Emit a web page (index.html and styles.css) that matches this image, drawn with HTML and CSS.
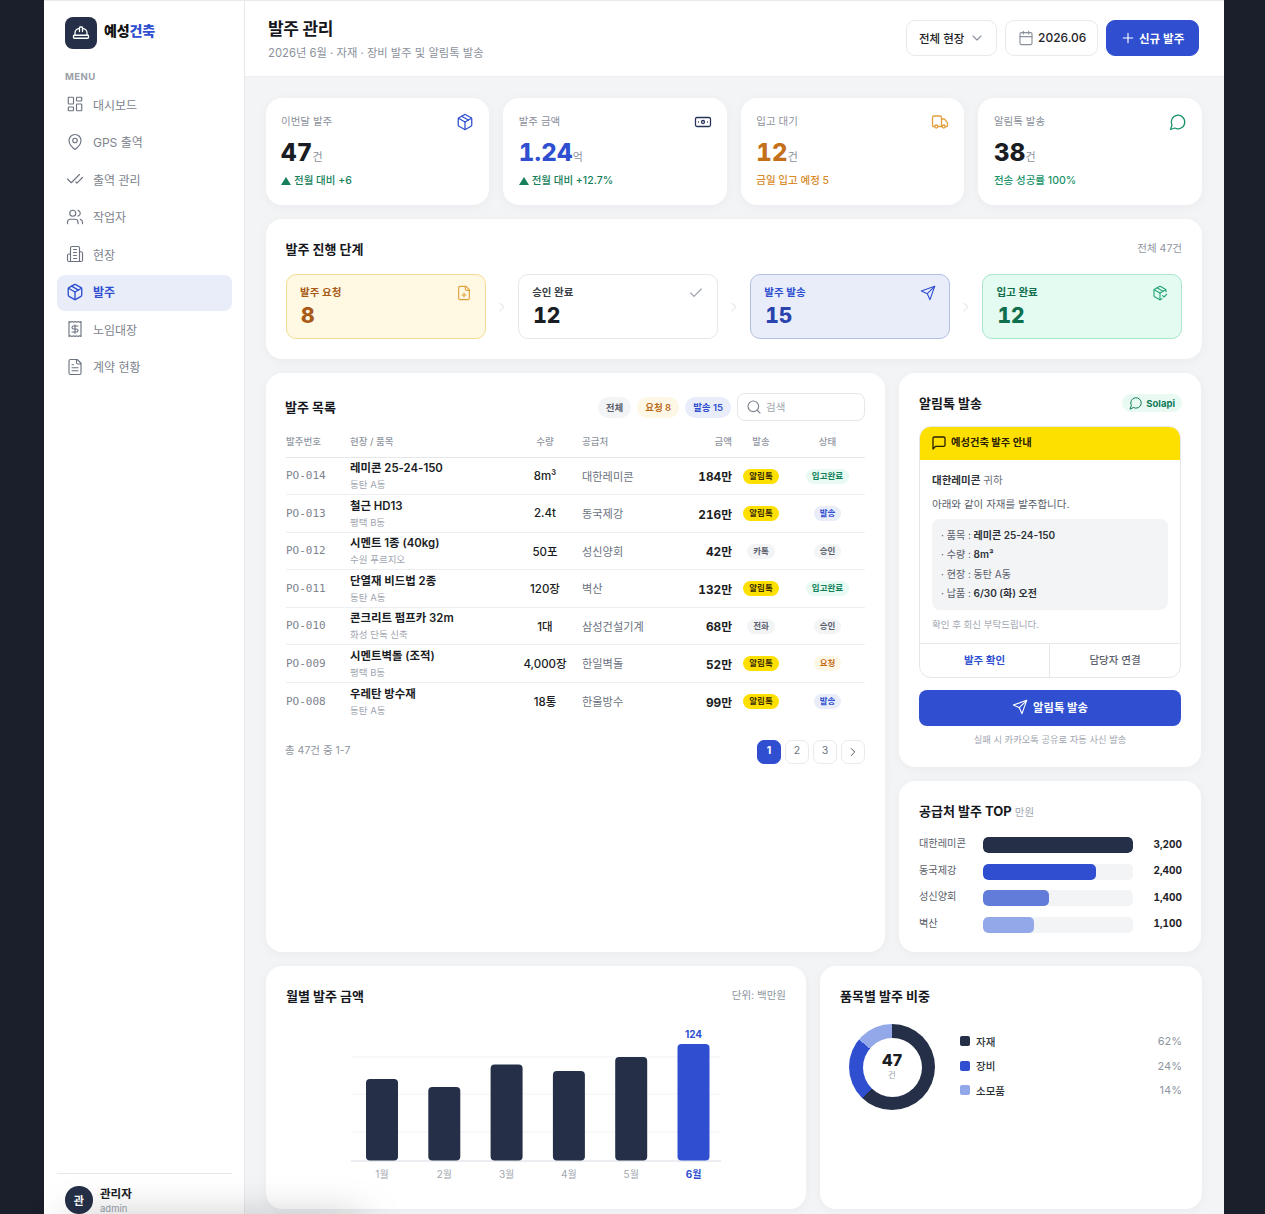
FILE: index.html
```html
<!DOCTYPE html>
<html lang="ko">
<head>
<meta charset="utf-8">
<title>발주 관리</title>
<link rel="stylesheet" href="styles.css">
</head>
<body>
<svg class="sprite" aria-hidden="true">
  <symbol id="i-hat" viewBox="0 0 24 24"><path d="M2 18a1 1 0 0 0 1 1h18a1 1 0 0 0 1-1v-2a1 1 0 0 0-1-1H3a1 1 0 0 0-1 1v2z"/><path d="M10 10V5a1 1 0 0 1 1-1h2a1 1 0 0 1 1 1v5"/><path d="M4 15v-3a6 6 0 0 1 6-6"/><path d="M14 6a6 6 0 0 1 6 6v3"/></symbol>
  <symbol id="i-dash" viewBox="0 0 24 24"><rect x="3" y="3" width="7" height="9" rx="1"/><rect x="14" y="3" width="7" height="5" rx="1"/><rect x="14" y="12" width="7" height="9" rx="1"/><rect x="3" y="16" width="7" height="5" rx="1"/></symbol>
  <symbol id="i-pin" viewBox="0 0 24 24"><path d="M20 10c0 6-8 12-8 12s-8-6-8-12a8 8 0 0 1 16 0Z"/><circle cx="12" cy="10" r="3"/></symbol>
  <symbol id="i-checks" viewBox="0 0 24 24"><path d="M18 6 7 17l-5-5"/><path d="m22 10-7.5 7.5L13 16"/></symbol>
  <symbol id="i-users" viewBox="0 0 24 24"><path d="M16 21v-2a4 4 0 0 0-4-4H6a4 4 0 0 0-4 4v2"/><circle cx="9" cy="7" r="4"/><path d="M22 21v-2a4 4 0 0 0-3-3.87"/><path d="M16 3.13a4 4 0 0 1 0 7.75"/></symbol>
  <symbol id="i-building" viewBox="0 0 24 24"><path d="M6 22V4a2 2 0 0 1 2-2h8a2 2 0 0 1 2 2v18Z"/><path d="M6 12H4a2 2 0 0 0-2 2v6a2 2 0 0 0 2 2h2"/><path d="M18 9h2a2 2 0 0 1 2 2v9a2 2 0 0 1-2 2h-2"/><path d="M10 6h4M10 10h4M10 14h4M10 18h4"/></symbol>
  <symbol id="i-box" viewBox="0 0 24 24"><path d="M21 8a2 2 0 0 0-1-1.73l-7-4a2 2 0 0 0-2 0l-7 4A2 2 0 0 0 3 8v8a2 2 0 0 0 1 1.73l7 4a2 2 0 0 0 2 0l7-4A2 2 0 0 0 21 16Z"/><path d="m3.3 7 8.7 5 8.7-5"/><path d="M12 22V12"/><path d="m7.5 4.27 9 5.15"/></symbol>
  <symbol id="i-receipt" viewBox="0 0 24 24"><path d="M4 2v20l2-1 2 1 2-1 2 1 2-1 2 1 2-1 2 1V2l-2 1-2-1-2 1-2-1-2 1-2-1-2 1Z"/><path d="M16 8h-6a2 2 0 1 0 0 4h4a2 2 0 1 1 0 4H8"/><path d="M12 17.5v-11"/></symbol>
  <symbol id="i-file" viewBox="0 0 24 24"><path d="M15 2H6a2 2 0 0 0-2 2v16a2 2 0 0 0 2 2h12a2 2 0 0 0 2-2V7Z"/><path d="M14 2v4a2 2 0 0 0 2 2h4"/><path d="M10 9H8M16 13H8M16 17H8"/></symbol>
  <symbol id="i-fileplus" viewBox="0 0 24 24"><path d="M15 2H6a2 2 0 0 0-2 2v16a2 2 0 0 0 2 2h12a2 2 0 0 0 2-2V7Z"/><path d="M14 2v4a2 2 0 0 0 2 2h4"/><path d="M9 15h6"/><path d="M12 18v-6"/></symbol>
  <symbol id="i-bank" viewBox="0 0 24 24"><rect x="2" y="6" width="20" height="12" rx="2"/><circle cx="12" cy="12" r="2"/><path d="M6 12h.01M18 12h.01"/></symbol>
  <symbol id="i-truck" viewBox="0 0 24 24"><path d="M14 18V6a2 2 0 0 0-2-2H4a2 2 0 0 0-2 2v11a1 1 0 0 0 1 1h2"/><path d="M15 18H9"/><path d="M19 18h2a1 1 0 0 0 1-1v-3.65a1 1 0 0 0-.22-.624l-3.48-4.35A1 1 0 0 0 17.52 8H14"/><circle cx="17" cy="18" r="2"/><circle cx="7" cy="18" r="2"/></symbol>
  <symbol id="i-bubble" viewBox="0 0 24 24"><path d="M7.9 20A9 9 0 1 0 4 16.1L2 22Z"/></symbol>
  <symbol id="i-msq" viewBox="0 0 24 24"><path d="M21 15a2 2 0 0 1-2 2H7l-4 4V5a2 2 0 0 1 2-2h14a2 2 0 0 1 2 2z"/></symbol>
  <symbol id="i-check" viewBox="0 0 24 24"><path d="M20 6 9 17l-5-5"/></symbol>
  <symbol id="i-send" viewBox="0 0 24 24"><path d="m22 2-7 20-4-9-9-4Z"/><path d="M22 2 11 13"/></symbol>
  <symbol id="i-pkgcheck" viewBox="0 0 24 24"><path d="m16 16 2 2 4-4"/><path d="M21 10V8a2 2 0 0 0-1-1.73l-7-4a2 2 0 0 0-2 0l-7 4A2 2 0 0 0 3 8v8a2 2 0 0 0 1 1.73l7 4a2 2 0 0 0 2 0l2-1.14"/><path d="m7.5 4.27 9 5.15"/><path d="M3.29 7 12 12l8.71-5"/><path d="M12 22V12"/></symbol>
  <symbol id="i-down" viewBox="0 0 24 24"><path d="m6 9 6 6 6-6"/></symbol>
  <symbol id="i-right" viewBox="0 0 24 24"><path d="m9 18 6-6-6-6"/></symbol>
  <symbol id="i-cal" viewBox="0 0 24 24"><path d="M8 2v4M16 2v4"/><rect x="3" y="4" width="18" height="18" rx="2"/><path d="M3 10h18"/></symbol>
  <symbol id="i-plus" viewBox="0 0 24 24"><path d="M5 12h14M12 5v14"/></symbol>
  <symbol id="i-search" viewBox="0 0 24 24"><circle cx="11" cy="11" r="8"/><path d="m21 21-4.3-4.3"/></symbol>
</svg>

<div class="app">
  <aside class="sidebar">
    <div class="brand">
      <span class="brand-mark"><svg class="ic ic-18"><use href="#i-hat"/></svg></span>
      <span class="brand-name">예성<em>건축</em></span>
    </div>
    <div class="nav-label">MENU</div>
    <nav class="nav">
      <a class="nav-item"><svg class="ic ic-18"><use href="#i-dash"/></svg>대시보드</a>
      <a class="nav-item"><svg class="ic ic-18"><use href="#i-pin"/></svg>GPS 출역</a>
      <a class="nav-item"><svg class="ic ic-18"><use href="#i-checks"/></svg>출역 관리</a>
      <a class="nav-item"><svg class="ic ic-18"><use href="#i-users"/></svg>작업자</a>
      <a class="nav-item"><svg class="ic ic-18"><use href="#i-building"/></svg>현장</a>
      <a class="nav-item active"><svg class="ic ic-18"><use href="#i-box"/></svg>발주</a>
      <a class="nav-item"><svg class="ic ic-18"><use href="#i-receipt"/></svg>노임대장</a>
      <a class="nav-item"><svg class="ic ic-18"><use href="#i-file"/></svg>계약 현황</a>
    </nav>
    <div class="user">
      <span class="avatar">관</span>
      <div class="user-text"><strong>관리자</strong><span>admin</span></div>
    </div>
  </aside>

  <main class="main">
    <header class="topbar">
      <div class="topbar-title">
        <h1>발주 관리</h1>
        <p>2026년 6월 · 자재 · 장비 발주 및 알림톡 발송</p>
      </div>
      <div class="topbar-actions">
        <button class="btn btn-select">전체 현장<svg class="ic ic-16 muted"><use href="#i-down"/></svg></button>
        <button class="btn btn-date"><svg class="ic ic-16 muted"><use href="#i-cal"/></svg>2026.06</button>
        <button class="btn btn-primary"><svg class="ic ic-16"><use href="#i-plus"/></svg>신규 발주</button>
      </div>
    </header>

    <div class="content">
      <section class="kpis">
        <div class="card kpi">
          <div class="kpi-top"><span>이번달 발주</span><svg class="ic ic-18 c-blue"><use href="#i-box"/></svg></div>
          <div class="kpi-value">47<small>건</small></div>
          <div class="kpi-note c-green"><i class="tri"></i>전월 대비 +6</div>
        </div>
        <div class="card kpi">
          <div class="kpi-top"><span>발주 금액</span><svg class="ic ic-18 c-navy"><use href="#i-bank"/></svg></div>
          <div class="kpi-value c-blue">1.24<small>억</small></div>
          <div class="kpi-note c-green"><i class="tri"></i>전월 대비 +12.7%</div>
        </div>
        <div class="card kpi">
          <div class="kpi-top"><span>입고 대기</span><svg class="ic ic-18 c-gold"><use href="#i-truck"/></svg></div>
          <div class="kpi-value c-orange">12<small>건</small></div>
          <div class="kpi-note c-amber">금일 입고 예정 5</div>
        </div>
        <div class="card kpi">
          <div class="kpi-top"><span>알림톡 발송</span><svg class="ic ic-18 c-teal"><use href="#i-bubble"/></svg></div>
          <div class="kpi-value">38<small>건</small></div>
          <div class="kpi-note c-teal">전송 성공률 100%</div>
        </div>
      </section>

      <section class="card stages-card">
        <div class="card-head">
          <h2>발주 진행 단계</h2>
          <span class="hint">전체 47건</span>
        </div>
        <div class="stages">
          <div class="stage s-amber">
            <div class="stage-top"><span>발주 요청</span><svg class="ic ic-16"><use href="#i-fileplus"/></svg></div>
            <div class="stage-num">8</div>
          </div>
          <svg class="ic ic-16 stage-arrow"><use href="#i-right"/></svg>
          <div class="stage s-plain">
            <div class="stage-top"><span>승인 완료</span><svg class="ic ic-16"><use href="#i-check"/></svg></div>
            <div class="stage-num">12</div>
          </div>
          <svg class="ic ic-16 stage-arrow"><use href="#i-right"/></svg>
          <div class="stage s-blue">
            <div class="stage-top"><span>발주 발송</span><svg class="ic ic-16"><use href="#i-send"/></svg></div>
            <div class="stage-num">15</div>
          </div>
          <svg class="ic ic-16 stage-arrow"><use href="#i-right"/></svg>
          <div class="stage s-green">
            <div class="stage-top"><span>입고 완료</span><svg class="ic ic-16"><use href="#i-pkgcheck"/></svg></div>
            <div class="stage-num">12</div>
          </div>
        </div>
      </section>

      <section class="mid">
        <div class="card list-card">
          <div class="list-head">
            <h2>발주 목록</h2>
            <div class="filters">
              <span class="pill p-gray">전체</span>
              <span class="pill p-amber">요청 8</span>
              <span class="pill p-blue">발송 15</span>
              <label class="search"><svg class="ic ic-16"><use href="#i-search"/></svg><span>검색</span></label>
            </div>
          </div>
          <table class="orders">
            <colgroup><col class="w-id"><col class="w-item"><col class="w-qty"><col class="w-sup"><col class="w-amt"><col class="w-send"><col class="w-stat"></colgroup>
            <thead>
              <tr><th>발주번호</th><th>현장 / 품목</th><th class="ctr">수량</th><th class="sup">공급처</th><th class="rgt">금액</th><th class="ctr">발송</th><th class="ctr">상태</th></tr>
            </thead>
            <tbody>
              <tr><td class="po">PO-014</td><td><b>레미콘 25-24-150</b><small>동탄 A동</small></td><td class="qty">8m³</td><td class="sup">대한레미콘</td><td class="amt">184만</td><td class="ctr"><span class="tag t-kakao">알림톡</span></td><td class="ctr"><span class="tag t-green">입고완료</span></td></tr>
              <tr><td class="po">PO-013</td><td><b>철근 HD13</b><small>평택 B동</small></td><td class="qty">2.4t</td><td class="sup">동국제강</td><td class="amt">216만</td><td class="ctr"><span class="tag t-kakao">알림톡</span></td><td class="ctr"><span class="tag t-blue">발송</span></td></tr>
              <tr><td class="po">PO-012</td><td><b>시멘트 1종 (40kg)</b><small>수원 푸르지오</small></td><td class="qty">50포</td><td class="sup">성신양회</td><td class="amt">42만</td><td class="ctr"><span class="tag t-gray">카톡</span></td><td class="ctr"><span class="tag t-gray">승인</span></td></tr>
              <tr><td class="po">PO-011</td><td><b>단열재 비드법 2종</b><small>동탄 A동</small></td><td class="qty">120장</td><td class="sup">벽산</td><td class="amt">132만</td><td class="ctr"><span class="tag t-kakao">알림톡</span></td><td class="ctr"><span class="tag t-green">입고완료</span></td></tr>
              <tr><td class="po">PO-010</td><td><b>콘크리트 펌프카 32m</b><small>화성 단독 신축</small></td><td class="qty">1대</td><td class="sup">삼성건설기계</td><td class="amt">68만</td><td class="ctr"><span class="tag t-gray">전화</span></td><td class="ctr"><span class="tag t-gray">승인</span></td></tr>
              <tr><td class="po">PO-009</td><td><b>시멘트벽돌 (조적)</b><small>평택 B동</small></td><td class="qty">4,000장</td><td class="sup">한일벽돌</td><td class="amt">52만</td><td class="ctr"><span class="tag t-kakao">알림톡</span></td><td class="ctr"><span class="tag t-amber">요청</span></td></tr>
              <tr><td class="po">PO-008</td><td><b>우레탄 방수재</b><small>동탄 A동</small></td><td class="qty">18통</td><td class="sup">한울방수</td><td class="amt">99만</td><td class="ctr"><span class="tag t-kakao">알림톡</span></td><td class="ctr"><span class="tag t-blue">발송</span></td></tr>
            </tbody>
          </table>
          <div class="pager">
            <span class="pager-info">총 47건 중 1-7</span>
            <div class="pages">
              <span class="page on">1</span><span class="page">2</span><span class="page">3</span><span class="page"><svg class="ic ic-14"><use href="#i-right"/></svg></span>
            </div>
          </div>
        </div>

        <div class="side-col">
          <div class="card talk-card">
            <div class="talk-head">
              <h2>알림톡 발송</h2>
              <span class="solapi"><svg class="ic ic-14"><use href="#i-bubble"/></svg>Solapi</span>
            </div>
            <div class="talk">
              <div class="talk-bar"><svg class="ic ic-16"><use href="#i-msq"/></svg>예성건축 발주 안내</div>
              <div class="talk-body">
                <p class="talk-to"><b>대한레미콘</b> 귀하</p>
                <p class="talk-line">아래와 같이 자재를 발주합니다.</p>
                <ul class="talk-list">
                  <li>· 품목 : <b>레미콘 25-24-150</b></li>
                  <li>· 수량 : <b>8m³</b></li>
                  <li>· 현장 : 동탄 A동</li>
                  <li>· 납품 : <b>6/30 (화) 오전</b></li>
                </ul>
                <p class="talk-foot">확인 후 회신 부탁드립니다.</p>
              </div>
              <div class="talk-actions"><span class="primary">발주 확인</span><span>담당자 연결</span></div>
            </div>
            <button class="send-btn"><svg class="ic ic-16"><use href="#i-send"/></svg>알림톡 발송</button>
            <p class="send-note">실패 시 카카오톡 공유로 자동 사신 발송</p>
          </div>

          <div class="card top-card">
            <h2>공급처 발주 TOP <small>만원</small></h2>
            <div class="rank"><span class="rank-name">대한레미콘</span><div class="track"><div class="fill f1"></div></div><span class="rank-val">3,200</span></div>
            <div class="rank"><span class="rank-name">동국제강</span><div class="track"><div class="fill f2"></div></div><span class="rank-val">2,400</span></div>
            <div class="rank"><span class="rank-name">성신양회</span><div class="track"><div class="fill f3"></div></div><span class="rank-val">1,400</span></div>
            <div class="rank"><span class="rank-name">벽산</span><div class="track"><div class="fill f4"></div></div><span class="rank-val">1,100</span></div>
          </div>
        </div>
      </section>

      <section class="bottom">
        <div class="card chart-card">
          <div class="card-head chart-head">
            <h2>월별 발주 금액</h2>
            <span class="hint">단위: 백만원</span>
          </div>
          <svg class="chart" width="500" height="170" viewBox="0 0 500 170">
            <g class="grid"><line x1="65" x2="435" y1="36" y2="36"/><line x1="65" x2="435" y1="73" y2="73"/><line x1="65" x2="435" y1="111" y2="111"/></g>
            <line class="axis" x1="65" x2="435" y1="140" y2="140"/>
            <g class="bars">
              <rect x="80" y="58" width="32" height="81.5" rx="4"/>
              <rect x="142.3" y="66" width="32" height="73.5" rx="4"/>
              <rect x="204.6" y="43.5" width="32" height="96" rx="4"/>
              <rect x="266.9" y="50" width="32" height="89.5" rx="4"/>
              <rect x="329.2" y="36" width="32" height="103.5" rx="4"/>
              <rect class="now" x="391.5" y="23" width="32" height="116.5" rx="4"/>
            </g>
            <text class="peak" x="407.5" y="17">124</text>
            <g class="months">
              <text x="96" y="157">1월</text><text x="158.3" y="157">2월</text><text x="220.6" y="157">3월</text><text x="282.9" y="157">4월</text><text x="345.2" y="157">5월</text><text class="now" x="407.5" y="157">6월</text>
            </g>
          </svg>
        </div>

        <div class="card share-card">
          <h2>품목별 발주 비중</h2>
          <div class="share">
            <div class="donut"><div class="donut-hole"><b>47</b><span>건</span></div></div>
            <ul class="legend">
              <li><i class="sw sw1"></i><span>자재</span><em>62%</em></li>
              <li><i class="sw sw2"></i><span>장비</span><em>24%</em></li>
              <li><i class="sw sw3"></i><span>소모품</span><em>14%</em></li>
            </ul>
          </div>
        </div>
      </section>
    </div>
  </main>
</div>
<div class="edge-shade"></div>
</body>
</html>
```

FILE: styles.css
```css
* { box-sizing: border-box; }
html, body { margin: 0; height: 1214px; overflow: hidden; }
body {
  background: #1a1f2b;
  font-family: "Inter", "Noto Sans CJK KR", sans-serif;
  color: #1a1d23;
  position: relative;
}
h1, h2, p, ul { margin: 0; padding: 0; }
ul { list-style: none; }
.sprite { position: absolute; width: 0; height: 0; }

.ic { width: 15px; height: 15px; flex: none; fill: none; stroke: currentColor; stroke-width: 1.7; stroke-linecap: round; stroke-linejoin: round; }
.ic-14 { width: 14px; height: 14px; }
.ic-16 { width: 16px; height: 16px; }
.ic-18 { width: 18px; height: 18px; }
.muted { color: #8b919c; }

.c-blue { color: #2f4fd0; }
.c-navy { color: #27345a; }
.c-green { color: #15805a; }
.c-amber { color: #d98a2b; }
.c-gold { color: #e0a03a; }
.c-orange { color: #c4701a; }
.c-teal { color: #17936a; }

.app { width: 1180px; height: 1214px; margin-left: 44px; display: flex; background: #f3f4f6; border-top: 1px solid #e8e9ec; }

/* sidebar */
.sidebar { width: 201px; flex: none; background: #fff; border-right: 1px solid #e5e7eb; padding: 16px 12px 0 13px; display: flex; flex-direction: column; }
.brand { display: flex; align-items: center; gap: 7px; padding-left: 8px; }
.brand-mark { width: 32px; height: 32px; border-radius: 8px; background: #253048; color: #fff; display: flex; align-items: center; justify-content: center; }
.brand-name { font-size: 14px; font-weight: 800; color: #111; padding-bottom: 6px; letter-spacing: -.1px; }
.brand-name em { font-style: normal; color: #2f4fd0; }
.nav-label { font-size: 9.5px; font-weight: 700; letter-spacing: .5px; color: #9aa0aa; padding-left: 8px; margin-top: 22px; line-height: 12px; }
.nav { margin-top: 4px; display: flex; flex-direction: column; gap: 1.5px; }
.nav-item { height: 36px; display: flex; align-items: center; gap: 9px; padding: 0 0 2px 9px; font-size: 12px; color: #7d838d; border-radius: 8px; }
.nav-item .ic { stroke-width: 1.5; color: #6b7280; }
.nav-item.active { background: #e9edfa; color: #2f4fd0; font-weight: 700; }
.nav-item.active .ic { color: #2f4fd0; stroke-width: 1.8; }
.user { margin-top: auto; border-top: 1px solid #e5e7eb; padding: 12px 0 0 8px; display: flex; gap: 7.5px; height: 41px; }
.avatar { width: 27.5px; height: 27.5px; border-radius: 50%; background: #253048; color: #fff; font-size: 11px; font-weight: 700; display: flex; align-items: center; justify-content: center; }
.user-text { display: flex; flex-direction: column; margin-top: 1px; }
.user-text strong { font-size: 11.5px; line-height: 15px; font-weight: 700; }
.user-text span { font-size: 9.5px; line-height: 14px; color: #9aa0aa; }

/* topbar */
.main { flex: 1; min-width: 0; }
.topbar { height: 76px; background: #fff; border-bottom: 1px solid #eceef1; display: flex; align-items: center; justify-content: space-between; padding: 0 25px 2px 23px; }
.topbar-title { margin-top: 4px; }
.topbar h1 { font-size: 17px; font-weight: 700; line-height: 22px; letter-spacing: -.3px; color: #16181d; }
.topbar p { font-size: 11.3px; color: #8b919c; margin-top: 5px; line-height: 16px; }
.topbar-actions { display: flex; gap: 8px; }
.btn { height: 36px; border-radius: 9px; border: 1px solid #e8eaee; background: #fff; font: inherit; font-size: 11.5px; font-weight: 500; color: #1f2329; display: flex; align-items: center; padding: 0; }
.btn-select { width: 91px; padding-left: 12px; gap: 5px; }
.btn-date { width: 93px; padding-left: 12px; gap: 4px; font-size: 12px; }
.btn-primary { width: 93px; background: #2f4fd0; border-color: #2f4fd0; color: #fff; padding-left: 13px; gap: 3px; font-weight: 600; }

/* content */
.content { padding: 21px 22px 0 20.5px; display: flex; flex-direction: column; gap: 14px; }
.card { background: #fff; border-radius: 16px; box-shadow: 0 2px 12px rgba(20, 28, 48, .04); }
h2 { font-size: 13px; font-weight: 700; color: #16181d; line-height: 18px; }
.hint { font-size: 10.5px; color: #8f95a0; padding-bottom: 3px; }
.card-head { display: flex; justify-content: space-between; align-items: center; }

.kpis { display: grid; grid-template-columns: repeat(4, 1fr); gap: 14px; }
.kpi { height: 107px; padding: 15px 15px 0 15.5px; }
.kpi-top { display: flex; justify-content: space-between; align-items: flex-start; font-size: 10.5px; color: #8b919c; line-height: 17px; height: 18px; }
.kpi-value { font-size: 24px; font-weight: 800; line-height: 30px; margin-top: 7px; letter-spacing: .3px; color: #1a1d23; font-variant-numeric: tabular-nums; }
.kpi-value.c-blue { color: #2f4fd0; }
.kpi-value.c-orange { color: #c4701a; }
.kpi-value small { font-size: 11px; font-weight: 400; color: #8b919c; letter-spacing: 0; }
.kpi-note { font-size: 10.5px; font-weight: 500; line-height: 14px; margin-top: 1.5px; display: flex; align-items: center; gap: 3px; }
.tri { width: 0; height: 0; border-left: 5px solid transparent; border-right: 5px solid transparent; border-bottom: 8px solid #15805a; }

.stages-card { height: 140px; padding: 21px 20px 0; }
.stages { display: flex; align-items: center; justify-content: space-between; margin-top: 16px; }
.stage { width: 200px; height: 65px; border: 1px solid; border-radius: 10px; padding: 10px 13px 0 13.5px; }
.stage-top { display: flex; justify-content: space-between; align-items: center; font-size: 10.5px; font-weight: 600; line-height: 15px; height: 15px; }
.stage-num { font-size: 21px; font-weight: 800; line-height: 28px; margin-top: 2px; padding-left: 1px; font-variant-numeric: tabular-nums; }
.stage-arrow { color: #e8eaee; }
.s-amber { background: #fff8e3; border-color: #f6dc92; color: #a85a16; }
.s-amber .ic { color: #e0a03a; }
.s-plain { background: #fff; border-color: #e5e7eb; color: #3a3f47; }
.s-plain .ic { color: #9aa0aa; }
.s-plain .stage-num { color: #1a1d23; }
.s-blue { background: #e9edfa; border-color: #b3bfde; color: #2f4fd0; }
.s-blue .stage-num { color: #2a44ad; }
.s-green { background: #e3fbf0; border-color: #a9e6cb; color: #0f6e4d; }
.s-green .ic { color: #25a478; }

.mid { display: grid; grid-template-columns: 619.5px 302px; gap: 14px; }
.list-card { height: 579px; padding: 20px 20px 0 19.5px; }
.list-head { display: flex; justify-content: space-between; align-items: center; height: 28px; }
.filters { display: flex; align-items: center; gap: 6px; }
.pill { height: 21px; border-radius: 11px; padding: 0 8px; font-size: 9.5px; font-weight: 600; display: flex; align-items: center; }
.p-gray { background: #f3f4f6; color: #5a606b; }
.p-amber { background: #fff7e6; color: #b96d1d; }
.p-blue { background: #e9edfa; color: #2f4fd0; }
.search { width: 128px; height: 28px; border: 1px solid #e5e7eb; border-radius: 8px; display: flex; align-items: center; gap: 4px; padding-left: 8px; font-size: 10.5px; color: #a1a6af; }
.search span { margin-top: -2px; }
.search .ic { color: #7d838d; }

.orders { width: 579px; margin-top: 4px; margin-left: 1px; border-collapse: collapse; table-layout: fixed; }
.w-id { width: 64px; } .w-item { width: 166px; } .w-qty { width: 58px; } .w-sup { width: 100px; } .w-amt { width: 58px; } .w-send { width: 58px; } .w-stat { width: 75px; }
.orders th { height: 32px; font-size: 9.5px; font-weight: 500; color: #8f95a0; text-align: left; padding: 0; border-bottom: 1px solid #e5e7eb; }
.orders th.rgt { text-align: right; }
.orders td { height: 37.5px; padding: 0; font-size: 11.5px; border-bottom: 1px solid #eceef1; }
.orders tbody tr:last-child td { border-bottom: 0; }
.orders th.ctr, .orders td.ctr { text-align: center; }
.orders th.sup, .orders td.sup { padding-left: 8px; }
.orders td.sup { font-size: 11.2px; color: #6b7280; }
.orders td.po { font-family: "DejaVu Sans Mono", "Liberation Mono", monospace; font-size: 11px; color: #7d838d; }
.orders b { display: block; font-size: 11.4px; font-weight: 600; line-height: 18px; color: #1a1d23; }
.orders small { display: block; font-size: 9.5px; line-height: 14px; margin-top: 1px; color: #a1a6af; }
.qty { text-align: center; font-weight: 500; color: #1a1d23; }
.orders td.amt { text-align: right; font-weight: 700; font-size: 11.8px; color: #1a1d23; font-variant-numeric: tabular-nums; }
.tag { display: inline-block; font-size: 8.5px; font-weight: 600; line-height: 15px; padding: 0 6px; border-radius: 8px; }
.t-kakao { background: #fee000; color: #3a2a00; }
.t-green { background: #e8faf2; color: #0f805a; }
.t-blue { background: #e9edfa; color: #2f4fd0; }
.t-gray { background: #f3f4f6; color: #5a606b; }
.t-amber { background: #fff7e6; color: #c4701a; }

.pager { display: flex; justify-content: space-between; align-items: flex-start; margin-top: 20px; }
.pager-info { font-size: 10.5px; color: #8f95a0; line-height: 21px; }
.pages { display: flex; gap: 4px; }
.page { width: 24px; height: 24px; border: 1px solid #e8eaee; border-radius: 7px; font-size: 10.5px; color: #6b7280; display: flex; align-items: center; justify-content: center; padding-bottom: 3px; }
.page.on { background: #2f4fd0; border-color: #2f4fd0; color: #fff; font-weight: 700; }
.page .ic { margin-top: 3px; color: #4b5563; }

.side-col { display: flex; flex-direction: column; gap: 14px; }
.talk-card { height: 394px; padding: 20px; }
.talk-head { display: flex; justify-content: space-between; align-items: center; height: 20px; }
.solapi { height: 18px; padding: 0 7px; border-radius: 9px; background: #e8faf2; color: #12795a; font-size: 9.5px; font-weight: 700; display: flex; align-items: center; gap: 3px; margin-right: -1px; }
.talk { margin-top: 13px; height: 252px; border: 1px solid #e5e7eb; border-radius: 12px; overflow: hidden; display: flex; flex-direction: column; width: 262px; }
.talk-bar { height: 34px; background: #fee000; margin: -1px -1px 0; padding: 0 0 3px 12px; display: flex; align-items: center; gap: 4px; font-size: 10.3px; font-weight: 700; color: #2a2000; }
.talk-bar .ic { stroke-width: 2; margin-top: 2px; }
.talk-body { flex: 1; padding: 14px 12px 0; }
.talk-to { font-size: 10.5px; color: #6b7280; line-height: 14px; }
.talk-to b { color: #2d3238; font-weight: 700; }
.talk-line { font-size: 10.5px; color: #5a606b; line-height: 14px; margin-top: 10px; }
.talk-list { background: #f3f4f6; border-radius: 8px; margin-top: 7px; height: 91px; padding: 7px 9px; font-size: 10px; color: #5a606b; }
.talk-list li { line-height: 19.3px; }
.talk-list b { font-weight: 600; color: #2d3238; }
.talk-foot { font-size: 9.5px; color: #a1a6af; margin-top: 8px; line-height: 13px; }
.talk-actions { height: 34px; border-top: 1px solid #e5e7eb; display: grid; grid-template-columns: 129px 1fr; font-size: 10.5px; color: #5a606b; font-weight: 500; }
.talk-actions span { display: flex; align-items: center; justify-content: center; padding-bottom: 3px; }
.talk-actions span + span { border-left: 1px solid #e5e7eb; }
.talk-actions .primary { color: #2f4fd0; font-weight: 700; }
.send-btn { display: flex; align-items: center; justify-content: center; gap: 5px; width: 262px; height: 36px; margin-top: 12px; border: 0; border-radius: 8px; background: #2f4fd0; color: #fff; font: inherit; font-size: 11.3px; font-weight: 600; padding-bottom: 3px; }
.send-note { text-align: center; font-size: 9.3px; color: #a1a6af; margin-top: 7px; line-height: 13px; }

.top-card { height: 171px; padding: 21px 20px 0; }
.top-card h2 small { font-size: 10.5px; font-weight: 400; color: #a1a6af; }
.rank { display: grid; grid-template-columns: 64px 150px 1fr; align-items: center; height: 16px; margin-top: 10.5px; }
.top-card h2 + .rank { margin-top: 15px; }
.rank-name { font-size: 10.2px; color: #5a606b; margin-top: -5px; }
.track { height: 16px; border-radius: 5px; background: #f3f4f6; overflow: hidden; }
.fill { height: 100%; border-radius: 5px; }
.f1 { width: 100%; background: #253048; }
.f2 { width: 75%; background: #2f4fd0; }
.f3 { width: 44%; background: #617cd9; }
.f4 { width: 34%; background: #93a8e8; }
.rank-val { font-size: 10px; font-weight: 700; text-align: right; color: #1f2329; margin-right: -1px; margin-top: -3px; font-variant-numeric: tabular-nums; }

.bottom { display: grid; grid-template-columns: 540.5px 1fr; gap: 14px; }
.bottom .card { height: 243px; }
.chart-card { padding: 21px 20px 0 20.5px; }
.chart { display: block; margin-top: 16px; }
.grid line { stroke: #f1f2f4; stroke-width: 1; }
.axis { stroke: #e5e7eb; stroke-width: 1.5; }
.bars rect { fill: #253048; }
.bars rect.now { fill: #2f4fd0; }
.chart text { font-family: "Inter", "Noto Sans CJK KR", sans-serif; text-anchor: middle; }
.peak { font-size: 10px; font-weight: 700; fill: #2f4fd0; }
.months text { font-size: 10px; fill: #a1a6af; }
.months text.now { fill: #2f4fd0; font-weight: 700; }

.share-card { padding: 21px 20px 0; }
.share { display: flex; align-items: flex-start; gap: 25px; margin-top: 19px; padding-left: 9px; }
.donut { width: 86px; height: 86px; flex: none; border-radius: 50%; background: conic-gradient(#253048 0 62%, #2f4fd0 62% 86%, #93a8e8 86% 100%); display: flex; align-items: center; justify-content: center; }
.donut-hole { width: 59px; height: 59px; border-radius: 50%; background: #fff; display: flex; flex-direction: column; align-items: center; justify-content: center; }
.donut-hole b { font-size: 16px; font-weight: 800; line-height: 18px; margin-top: -2px; }
.donut-hole span { font-size: 8.5px; color: #a1a6af; line-height: 12px; }
.legend { flex: 1; margin-top: 5px; font-size: 10.5px; }
.legend li { display: flex; align-items: center; height: 24.5px; }
.legend span { flex: 1; color: #2d3238; font-weight: 500; }
.legend em { font-style: normal; color: #8f95a0; font-size: 11px; }
.sw { width: 10px; height: 10px; border-radius: 2px; margin-right: 6px; }
.sw1 { background: #253048; } .sw2 { background: #2f4fd0; } .sw3 { background: #93a8e8; }

.edge-shade { position: absolute; left: 70px; bottom: -30px; width: 290px; height: 20px; background: #888; box-shadow: 0 0 44px rgba(0, 0, 0, .4); }
```
